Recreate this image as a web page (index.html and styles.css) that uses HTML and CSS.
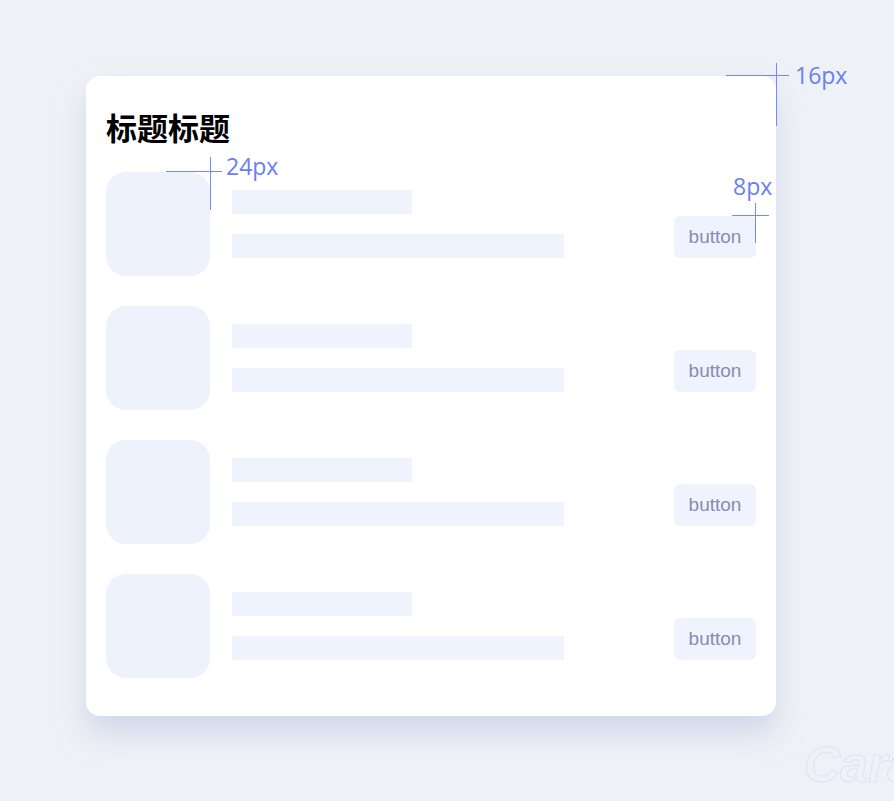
FILE: index.html
```html
<!DOCTYPE html>
<html lang="zh-CN">
<head>
    <meta charset="UTF-8">
    <meta name="viewport" content="width=device-width, initial-scale=1.0">
    <title>列表卡片</title>
    <link rel="stylesheet" href="styles.css">
</head>
<body>
    <div class="stage">
        <section class="card">
            <h2 class="card-title">标题标题</h2>
            <div class="list">
                <div class="item">
                    <div class="thumb"></div>
                    <div class="info">
                        <div class="bars">
                            <div class="bar short"></div>
                            <div class="bar long"></div>
                        </div>
                        <button class="btn">button</button>
                    </div>
                </div>
                <div class="item">
                    <div class="thumb"></div>
                    <div class="info">
                        <div class="bars">
                            <div class="bar short"></div>
                            <div class="bar long"></div>
                        </div>
                        <button class="btn">button</button>
                    </div>
                </div>
                <div class="item">
                    <div class="thumb"></div>
                    <div class="info">
                        <div class="bars">
                            <div class="bar short"></div>
                            <div class="bar long"></div>
                        </div>
                        <button class="btn">button</button>
                    </div>
                </div>
                <div class="item">
                    <div class="thumb"></div>
                    <div class="info">
                        <div class="bars">
                            <div class="bar short"></div>
                            <div class="bar long"></div>
                        </div>
                        <button class="btn">button</button>
                    </div>
                </div>
            </div>
        </section>

        <!-- spacing annotations -->
        <div class="mark mark-16">
            <span class="line-h"></span>
            <span class="line-v"></span>
            <span class="label">16px</span>
        </div>
        <div class="mark mark-24">
            <span class="line-h"></span>
            <span class="line-v"></span>
            <span class="label">24px</span>
        </div>
        <div class="mark mark-8">
            <span class="line-h"></span>
            <span class="line-v"></span>
            <span class="label">8px</span>
        </div>

        <div class="watermark">Cara</div>
    </div>
</body>
</html>
```

FILE: styles.css
```css
body {
    margin: 0;
    padding: 0;
    background-color: #eef1f6;
    font-family: "Liberation Sans", "Noto Sans CJK SC", sans-serif;
}
.stage {
    position: relative;
    width: 894px;
    height: 801px;
    overflow: hidden;
    padding: 76px 0 0 86px;
    box-sizing: border-box;
}
.card {
    width: 690px;
    height: 640px;
    box-sizing: border-box;
    padding: 35px 20px 0 20px;
    background-color: #fff;
    border-radius: 14px;
    box-shadow: 0 18px 28px rgba(190, 197, 225, 0.55);
}
.card-title {
    margin: 0 0 29px 0;
    font-family: "Noto Sans CJK SC", sans-serif;
    font-size: 31px;
    line-height: 32px;
    font-weight: 700;
    color: #000;
}
.list {
    display: flex;
    flex-direction: column;
    gap: 30px;
}
.item {
    display: flex;
    align-items: center;
}
.thumb {
    width: 104px;
    height: 104px;
    border-radius: 20px;
    background-color: #edf2fd;
    flex-shrink: 0;
}
.info {
    flex: 1;
    display: flex;
    align-items: flex-end;
    justify-content: space-between;
    padding-left: 22px;
}
.bars {
    display: flex;
    flex-direction: column;
    gap: 20px;
}
.bar {
    height: 24px;
    background-color: #eef3fd;
}
.bar.short {
    width: 180px;
}
.bar.long {
    width: 332px;
}
.btn {
    width: 82px;
    height: 42px;
    border: none;
    border-radius: 6px;
    background-color: #eef3fd;
    color: #868db0;
    font-family: "Liberation Sans", sans-serif;
    font-size: 19px;
    padding: 0 0 1px 0;
}

/* annotations */
.mark {
    position: absolute;
}
.mark .line-h,
.mark .line-v {
    position: absolute;
    background-color: #7489ff;
}
.mark .line-h {
    height: 1px;
}
.mark .line-v {
    width: 1px;
}
.mark .label {
    position: absolute;
    color: #6a80f2;
    font-family: "Open Sans", sans-serif;
    font-size: 23px;
    line-height: 28px;
    white-space: nowrap;
}
.mark-16 {
    left: 726px;
    top: 63px;
}
.mark-16 .line-h {
    left: 0;
    top: 12px;
    width: 63px;
}
.mark-16 .line-v {
    left: 50px;
    top: 0;
    height: 63px;
}
.mark-16 .label {
    left: 69px;
    top: -2px;
}
.mark-24 {
    left: 166px;
    top: 157px;
}
.mark-24 .line-h {
    left: 0;
    top: 14px;
    width: 56px;
}
.mark-24 .line-v {
    left: 44px;
    top: 0;
    height: 53px;
}
.mark-24 .label {
    left: 60px;
    top: -5px;
}
.mark-8 {
    left: 732px;
    top: 175px;
}
.mark-8 .line-h {
    left: 0;
    top: 40px;
    width: 37px;
}
.mark-8 .line-v {
    left: 23px;
    top: 28px;
    height: 40px;
}
.mark-8 .label {
    left: 1px;
    top: -3px;
}
.watermark {
    position: absolute;
    left: 804px;
    top: 736px;
    font-family: "Liberation Sans", sans-serif;
    font-size: 50px;
    font-weight: 700;
    font-style: italic;
    color: transparent;
    -webkit-text-stroke: 1px #dde2fb;
    white-space: nowrap;
}
```
